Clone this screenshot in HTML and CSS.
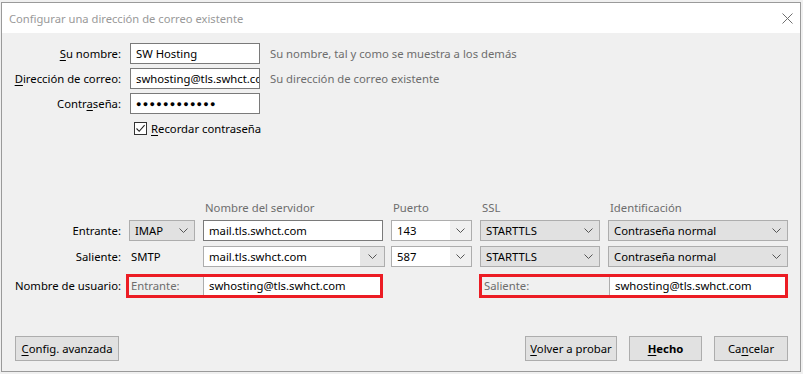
FILE: index.html
```html
<!DOCTYPE html>
<html lang="es">
<head>
  <meta charset="UTF-8" />
  <title>Configurar una dirección de correo existente</title>
  <link rel="stylesheet" href="styles.css">
</head>
<body>

<div class="dialog">
  <div class="titlebar">
    <span class="title">Configurar una dirección de correo existente</span>
    <svg class="close" width="11" height="11" viewBox="0 0 11 11">
      <path d="M0.5 0.5L10.5 10.5M10.5 0.5L0.5 10.5" stroke="#6f6f6f" stroke-width="1" fill="none"/>
    </svg>
  </div>

  <div class="content">
    <div class="identity">
      <span class="label"><u>S</u>u nombre:</span>
      <div class="field">SW Hosting</div>
      <span class="hint">Su nombre, tal y como se muestra a los demás</span>

      <span class="label"><u>D</u>irección de correo:</span>
      <div class="field">swhosting@tls.swhct.com</div>
      <span class="hint">Su dirección de correo existente</span>

      <span class="label">Contr<u>a</u>seña:</span>
      <div class="field password">●●●●●●●●●●●●</div>
      <span></span>

      <span></span>
      <div class="remember">
        <span class="checkbox">
          <svg width="11" height="11" viewBox="0 0 11 11">
            <path d="M1.5 5.5L4.2 8.3L9.6 2.2" stroke="#222" stroke-width="1.1" fill="none"/>
          </svg>
        </span>
        <span><u>R</u>ecordar contraseña</span>
      </div>
    </div>

    <div class="servers">
      <span></span>
      <span></span>
      <span class="col-head">Nombre del servidor</span>
      <span class="col-head">Puerto</span>
      <span class="col-head">SSL</span>
      <span class="col-head">Identificación</span>

      <span class="label row-label">Entrante:</span>
      <div class="select">IMAP<svg class="chevron" width="9" height="5" viewBox="0 0 9 5"><path d="M0.5 0.5L4.5 4.5L8.5 0.5" stroke="#555" fill="none"/></svg></div>
      <div class="field">mail.tls.swhct.com</div>
      <div class="combo"><span class="combo-text">143</span><span class="combo-btn"><svg class="chevron" width="9" height="5" viewBox="0 0 9 5"><path d="M0.5 0.5L4.5 4.5L8.5 0.5" stroke="#555" fill="none"/></svg></span></div>
      <div class="select">STARTTLS<svg class="chevron" width="9" height="5" viewBox="0 0 9 5"><path d="M0.5 0.5L4.5 4.5L8.5 0.5" stroke="#555" fill="none"/></svg></div>
      <div class="select">Contraseña normal<svg class="chevron" width="9" height="5" viewBox="0 0 9 5"><path d="M0.5 0.5L4.5 4.5L8.5 0.5" stroke="#555" fill="none"/></svg></div>

      <span class="label row-label">Saliente:</span>
      <span class="plain">SMTP</span>
      <div class="combo wide"><span class="combo-text">mail.tls.swhct.com</span><span class="combo-btn big"><svg class="chevron" width="9" height="5" viewBox="0 0 9 5"><path d="M0.5 0.5L4.5 4.5L8.5 0.5" stroke="#555" fill="none"/></svg></span></div>
      <div class="combo"><span class="combo-text">587</span><span class="combo-btn"><svg class="chevron" width="9" height="5" viewBox="0 0 9 5"><path d="M0.5 0.5L4.5 4.5L8.5 0.5" stroke="#555" fill="none"/></svg></span></div>
      <div class="select">STARTTLS<svg class="chevron" width="9" height="5" viewBox="0 0 9 5"><path d="M0.5 0.5L4.5 4.5L8.5 0.5" stroke="#555" fill="none"/></svg></div>
      <div class="select">Contraseña normal<svg class="chevron" width="9" height="5" viewBox="0 0 9 5"><path d="M0.5 0.5L4.5 4.5L8.5 0.5" stroke="#555" fill="none"/></svg></div>

      <span class="label user-label">Nombre de usuario:</span>
      <div class="user-box incoming">
        <span class="user-tag">Entrante:</span>
        <div class="user-field">swhosting@tls.swhct.com</div>
      </div>
      <span></span>
      <div class="user-box outgoing">
        <span class="user-tag">Saliente:</span>
        <div class="user-field">swhosting@tls.swhct.com</div>
      </div>
    </div>

    <div class="buttons">
      <button class="btn advanced"><u>C</u>onfig. avanzada</button>
      <span class="spacer"></span>
      <button class="btn retry"><u>V</u>olver a probar</button>
      <button class="btn done"><u>H</u>echo</button>
      <button class="btn cancel">Ca<u>n</u>celar</button>
    </div>
  </div>
</div>

</body>
</html>
```

FILE: styles.css
```css
body {
  margin: 2px 0 0 1px;
  background: #f0f0f0;
  font-family: 'Noto Sans', sans-serif;
  font-size: 11.3px;
  color: #000;
}

.dialog {
  width: 800px;
  height: 370px;
  box-sizing: border-box;
  border: 1px solid #9a9a9a;
  background: #f0f0f0;
  display: flex;
  flex-direction: column;
}

.titlebar {
  height: 30px;
  background: #fff;
  display: flex;
  align-items: center;
  justify-content: space-between;
  padding: 0 7px 0 7px;
}

.title {
  color: #999;
  font-size: 11.2px;
}

.close {
  margin-top: 1px;
}

.content {
  flex: 1;
  display: flex;
  flex-direction: column;
  padding-bottom: 10px;
}

u {
  text-decoration-thickness: 1px;
  text-underline-offset: 2px;
}

/* top form */
.identity {
  display: grid;
  grid-template-columns: 119px 130px auto;
  column-gap: 9px;
  row-gap: 4px;
  padding-top: 10px;
  align-items: center;
}

.label {
  text-align: right;
  white-space: nowrap;
}

.hint {
  color: #6d6d6d;
  padding-left: 1px;
}

.field {
  height: 21px;
  box-sizing: border-box;
  border: 1px solid #7a7a7a;
  background: #fff;
  padding: 0 5px;
  line-height: 19px;
  white-space: nowrap;
  overflow: hidden;
}

.password {
  font-size: 9px;
  letter-spacing: 1.3px;
}

.remember {
  grid-column: span 2;
  height: 13px;
  display: flex;
  align-items: center;
  gap: 4px;
  padding-left: 4px;
  margin-top: 4px;
  white-space: nowrap;
}

.checkbox {
  width: 13px;
  height: 13px;
  box-sizing: border-box;
  border: 1px solid #333;
  background: #fff;
  display: flex;
}

/* server settings */
.servers {
  display: grid;
  grid-template-columns: 119px 66px 180px 81px 120px 180px;
  grid-template-rows: 16px 21px 21px 18px;
  column-gap: 8px;
  row-gap: 0;
  align-items: start;
  margin-top: 65px;
}

.col-head {
  color: #6d6d6d;
  padding-left: 2px;
}

.servers > :nth-child(n+7):nth-child(-n+12) {
  margin-top: 4px;
}

.servers > :nth-child(n+13):nth-child(-n+18) {
  margin-top: 9px;
}

.servers > :nth-child(n+19) {
  margin-top: 19px;
}

.row-label,
.plain {
  line-height: 21px;
}

.select {
  height: 21px;
  box-sizing: border-box;
  border: 1px solid #adadad;
  background: #e1e1e1;
  padding: 0 6px 0 5px;
  display: flex;
  align-items: center;
  justify-content: space-between;
  white-space: nowrap;
}

.plain {
  padding-left: 2px;
}

.combo {
  height: 21px;
  box-sizing: border-box;
  border: 1px solid #adadad;
  background: #fff;
  display: flex;
  align-items: stretch;
}

.combo.wide {
  margin-right: -2px;
}

.combo-text {
  flex: 1;
  padding-left: 5px;
  line-height: 19px;
  white-space: nowrap;
}

.combo-btn {
  width: 21px;
  background: #f0f0f0;
  display: flex;
  align-items: center;
  justify-content: center;
}

.combo-btn.big {
  width: 24px;
  background: #e5e5e5;
}

.user-label {
  height: 18px;
  line-height: 18px;
}

.user-box {
  height: 18px;
  display: flex;
  outline: 3px solid #ec1c24;
}

.incoming {
  grid-column: span 2;
  margin-right: 3px;
}

.outgoing {
  grid-column: span 2;
  margin-left: 2px;
  margin-right: 3px;
}

.user-tag {
  color: #6d6d6d;
  padding-left: 2px;
  line-height: 18px;
}

.incoming .user-tag {
  width: 72px;
}

.outgoing .user-tag {
  width: 125px;
}

.user-field {
  flex: 1;
  border-left: 1px solid #adadad;
  background: #fff;
  padding-left: 5px;
  line-height: 18px;
  white-space: nowrap;
}

/* bottom buttons */
.buttons {
  display: flex;
  gap: 12px;
  padding: 0 12px 0 13px;
  margin-top: auto;
}

.spacer {
  flex: 1;
}

.btn {
  height: 25px;
  box-sizing: border-box;
  border: 1px solid #adadad;
  background: #e1e1e1;
  font-family: inherit;
  font-size: 11.3px;
  color: #000;
  padding: 0;
  white-space: nowrap;
}

.advanced { width: 104px; }
.retry { width: 92px; }
.done { width: 73px; font-weight: bold; }
.cancel { width: 74px; }
```
